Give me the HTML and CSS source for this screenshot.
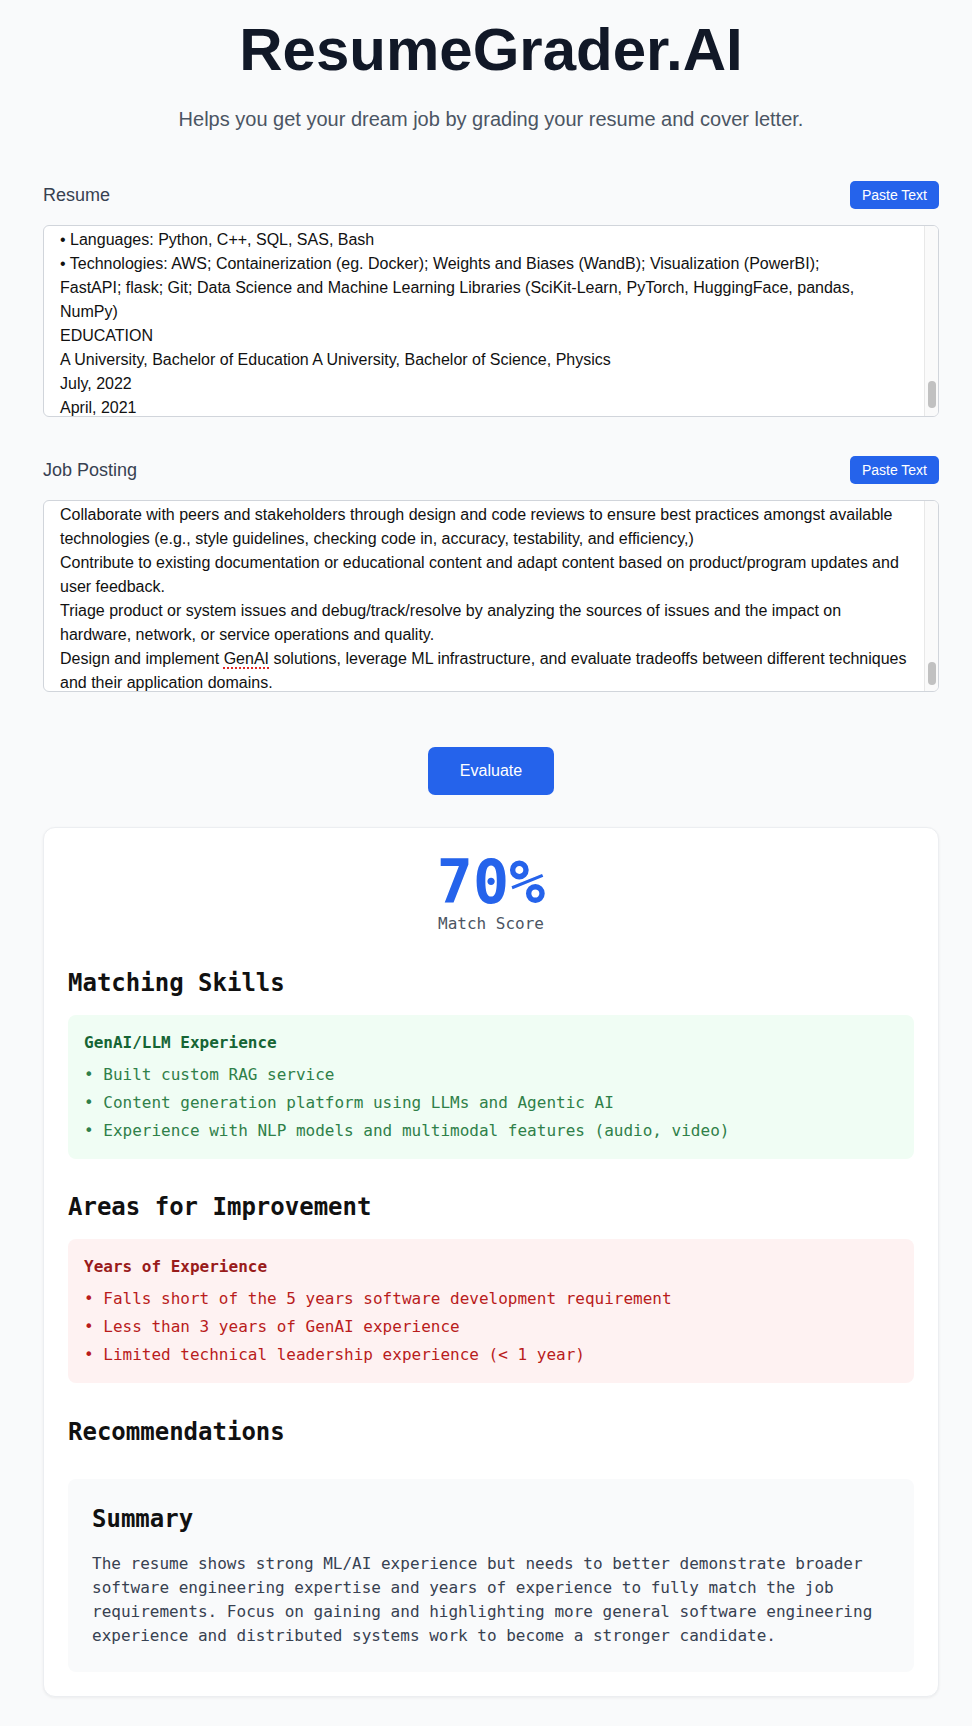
FILE: index.html
```html
<!DOCTYPE html>
<html lang="en">
<head>
<meta charset="utf-8">
<title>ResumeGrader.AI</title>
<link rel="stylesheet" href="styles.css">
</head>
<body>
<div class="page">
  <div class="container">
    <h1 class="title">ResumeGrader.AI</h1>
    <p class="subtitle">Helps you get your dream job by grading your resume and cover letter.</p>

    <section class="input-section first">
      <div class="input-header">
        <label class="input-label">Resume</label>
        <button class="paste-btn">Paste Text</button>
      </div>
      <div class="textbox">
        <div class="textbox-content">
          <div class="line">• Languages: Python, C++, SQL, SAS, Bash</div>
          <div class="line">• Technologies: AWS; Containerization (eg. Docker); Weights and Biases (WandB); Visualization (PowerBI);</div>
          <div class="line">FastAPI; flask; Git; Data Science and Machine Learning Libraries (SciKit-Learn, PyTorch, HuggingFace, pandas,</div>
          <div class="line">NumPy)</div>
          <div class="line">EDUCATION</div>
          <div class="line">A University, Bachelor of Education A University, Bachelor of Science, Physics</div>
          <div class="line">July, 2022</div>
          <div class="line">April, 2021</div>
        </div>
        <div class="scroll-track"><div class="scroll-thumb thumb-resume"></div></div>
      </div>
    </section>

    <section class="input-section">
      <div class="input-header">
        <label class="input-label">Job Posting</label>
        <button class="paste-btn">Paste Text</button>
      </div>
      <div class="textbox">
        <div class="textbox-content">
          <div class="line">Collaborate with peers and stakeholders through design and code reviews to ensure best practices amongst available</div>
          <div class="line">technologies (e.g., style guidelines, checking code in, accuracy, testability, and efficiency,)</div>
          <div class="line">Contribute to existing documentation or educational content and adapt content based on product/program updates and</div>
          <div class="line">user feedback.</div>
          <div class="line">Triage product or system issues and debug/track/resolve by analyzing the sources of issues and the impact on</div>
          <div class="line">hardware, network, or service operations and quality.</div>
          <div class="line">Design and implement <span class="misspelled">GenAI</span> solutions, leverage ML infrastructure, and evaluate tradeoffs between different techniques</div>
          <div class="line">and their application domains.</div>
        </div>
        <div class="scroll-track"><div class="scroll-thumb thumb-job"></div></div>
      </div>
    </section>

    <div class="evaluate-row">
      <button class="evaluate-btn">Evaluate</button>
    </div>

    <div class="results">
      <div class="score">
        <div class="score-value">70%</div>
        <div class="score-label">Match Score</div>
      </div>

      <section class="result-section">
        <h2 class="result-heading">Matching Skills</h2>
        <div class="result-box box-green">
          <div class="box-title">GenAI/LLM Experience</div>
          <div class="box-items">
            <div>• Built custom RAG service</div>
            <div>• Content generation platform using LLMs and Agentic AI</div>
            <div>• Experience with NLP models and multimodal features (audio, video)</div>
          </div>
        </div>
      </section>

      <section class="result-section">
        <h2 class="result-heading">Areas for Improvement</h2>
        <div class="result-box box-red">
          <div class="box-title">Years of Experience</div>
          <div class="box-items">
            <div>• Falls short of the 5 years software development requirement</div>
            <div>• Less than 3 years of GenAI experience</div>
            <div>• Limited technical leadership experience (&lt; 1 year)</div>
          </div>
        </div>
      </section>

      <section class="result-section last">
        <h2 class="result-heading rec-heading">Recommendations</h2>
        <div class="summary-box">
          <h3 class="summary-heading">Summary</h3>
          <p class="summary-text">The resume shows strong ML/AI experience but needs to better demonstrate broader software engineering expertise and years of experience to fully match the job requirements. Focus on gaining and highlighting more general software engineering experience and distributed systems work to become a stronger candidate.</p>
        </div>
      </section>
    </div>
  </div>
</div>
</body>
</html>
```

FILE: styles.css
```css
* { box-sizing: border-box; }

html, body {
  margin: 0;
  padding: 0;
  background: #f9fafb;
}

body {
  font-family: "Liberation Sans", Arial, sans-serif;
  color: #111827;
}

.page {
  padding: 20px 0 31px 10px;
}

.container {
  width: 896px;
  margin: 0 auto;
}

.title {
  margin: 0 0 25px;
  font-size: 60px;
  line-height: 60px;
  font-weight: 700;
  text-align: center;
  color: #111827;
}

.subtitle {
  margin: 0;
  font-size: 20px;
  line-height: 28px;
  text-align: center;
  color: #4b5563;
}

.input-section.first {
  margin-top: 48px;
}

.input-section {
  margin-top: 39px;
}

.input-header {
  display: flex;
  justify-content: space-between;
  align-items: center;
  margin-bottom: 16px;
}

.input-label {
  font-size: 18px;
  line-height: 28px;
  color: #374151;
}

.paste-btn {
  border: none;
  background: #2563eb;
  color: #ffffff;
  font-family: "Liberation Sans", Arial, sans-serif;
  font-size: 14px;
  line-height: 20px;
  padding: 4px 12px;
  border-radius: 5px;
}

.textbox {
  position: relative;
  height: 192px;
  background: #ffffff;
  border: 1px solid #d1d5db;
  border-radius: 6px;
  overflow: hidden;
}

.textbox-content {
  padding: 2px 30px 0 16px;
  font-size: 16px;
  line-height: 24px;
  color: #111111;
}

.line {
  white-space: nowrap;
}

.misspelled {
  text-decoration: underline dotted #e02424;
  text-decoration-thickness: 2px;
  text-underline-offset: 3px;
}

.scroll-track {
  position: absolute;
  top: 0;
  right: 0;
  bottom: 0;
  width: 14px;
  background: #fafafa;
  border-left: 1px solid #e8e8e8;
}

.scroll-thumb {
  position: absolute;
  left: 3px;
  width: 8px;
  border-radius: 4px;
  background: #c1c1c1;
}

.thumb-resume {
  top: 155px;
  height: 27px;
}

.thumb-job {
  top: 161px;
  height: 23px;
}

.evaluate-row {
  display: flex;
  justify-content: center;
  margin-top: 55px;
}

.evaluate-btn {
  border: none;
  background: #2563eb;
  color: #ffffff;
  font-family: "Liberation Sans", Arial, sans-serif;
  font-size: 16px;
  line-height: 24px;
  padding: 12px 32px;
  border-radius: 7px;
}

.results {
  margin-top: 32px;
  background: #ffffff;
  border: 1px solid #eceef1;
  border-radius: 12px;
  box-shadow: 0 1px 3px rgba(0, 0, 0, 0.06);
  padding: 24px;
  font-family: "DejaVu Sans Mono", "Liberation Mono", monospace;
}

.score {
  text-align: center;
  margin-bottom: 31px;
}

.score-value {
  font-size: 60px;
  line-height: 60px;
  font-weight: 700;
  color: #2563eb;
}

.score-label {
  font-size: 16px;
  line-height: 24px;
  color: #4b5563;
}

.result-section {
  margin-bottom: 32px;
}

.result-section + .result-section {
  margin-bottom: 33px;
}

.result-section.last {
  margin-bottom: 0;
}

.result-heading {
  margin: 0 0 16px;
  font-size: 24px;
  line-height: 32px;
  font-weight: 700;
  color: #111111;
}

.rec-heading {
  margin-bottom: 31px;
}

.result-box {
  padding: 16px;
  border-radius: 8px;
}

.box-title {
  font-size: 16px;
  line-height: 24px;
  font-weight: 700;
  margin-bottom: 8px;
}

.box-items {
  display: flex;
  flex-direction: column;
  gap: 4px;
  font-size: 16px;
  line-height: 24px;
}

.box-green {
  background: #f0fdf4;
}

.box-green .box-title {
  color: #166534;
}

.box-green .box-items {
  color: #2f8049;
}

.box-red {
  background: #fef2f2;
}

.box-red .box-title {
  color: #991b1b;
}

.box-red .box-items {
  color: #b91c1c;
}

.summary-box {
  background: #f9fafb;
  border-radius: 8px;
  padding: 24px;
}

.summary-heading {
  margin: 0 0 17px;
  font-size: 24px;
  line-height: 32px;
  font-weight: 700;
  color: #111111;
}

.summary-text {
  margin: 0;
  font-size: 16px;
  line-height: 24px;
  color: #374151;
}
```
